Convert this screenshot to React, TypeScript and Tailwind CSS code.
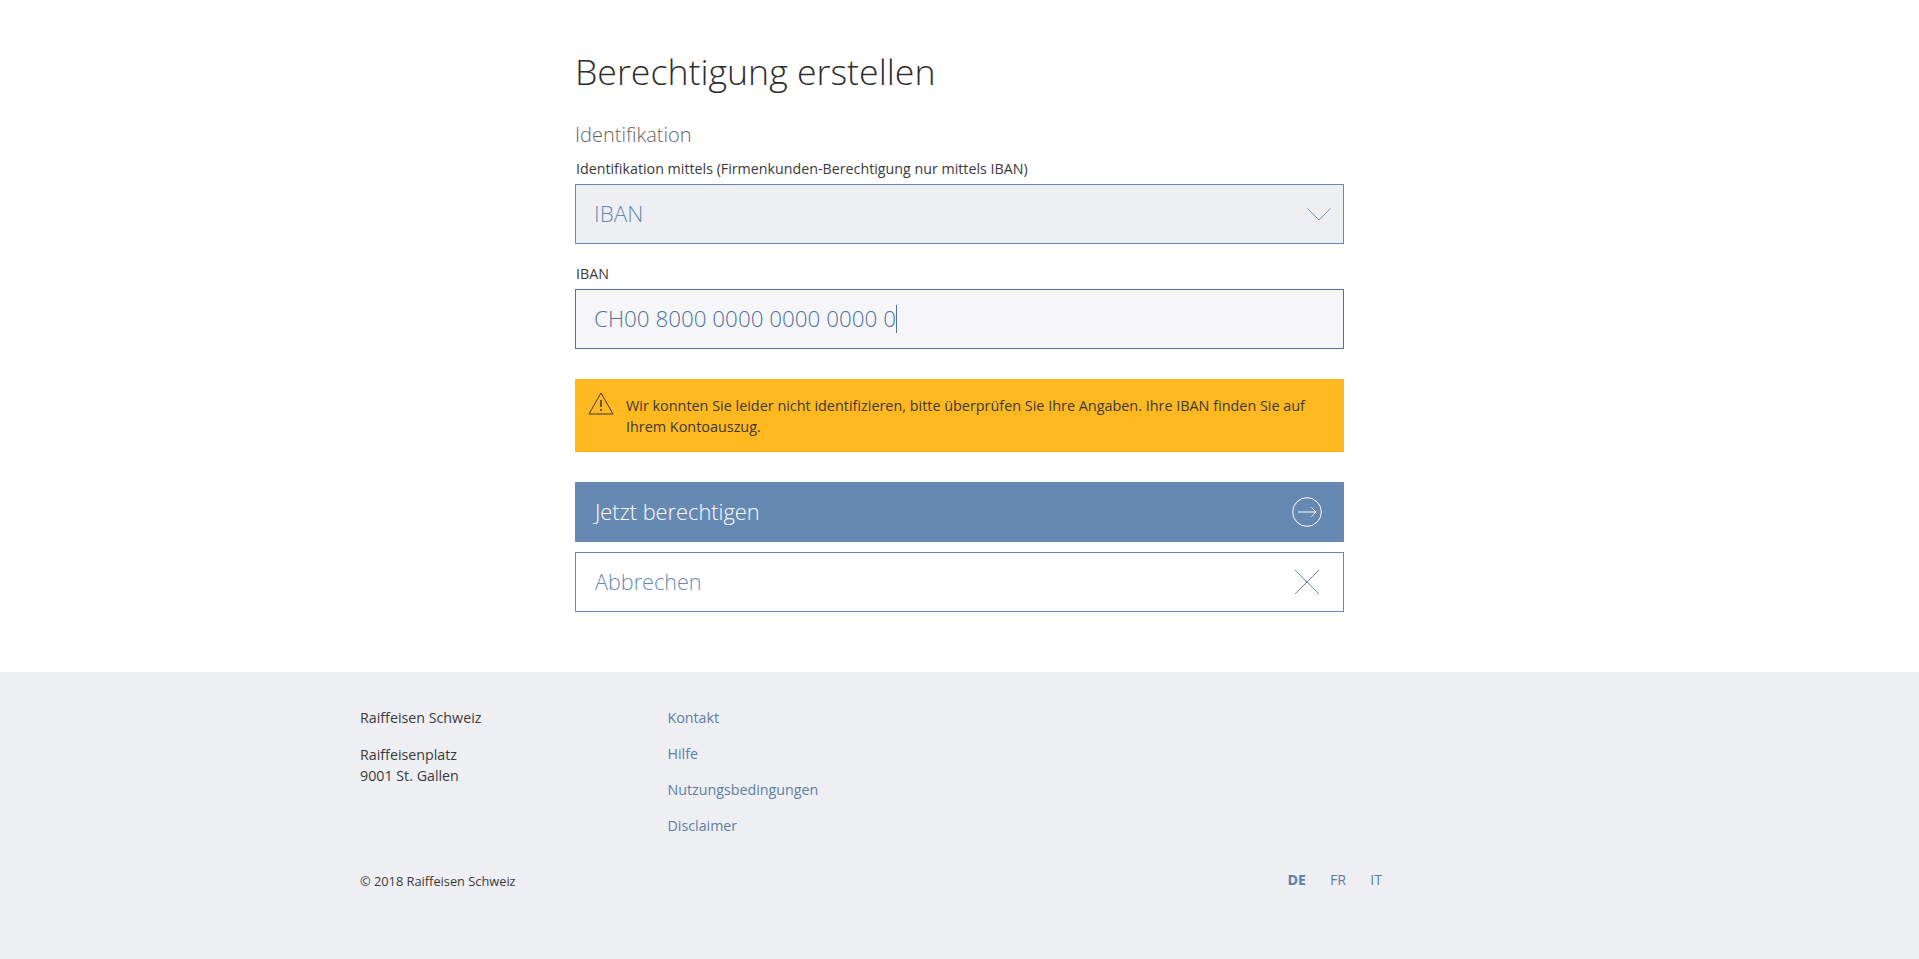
import React from 'react';

const App: React.FC = () => {
  return (
    <div className="min-h-[959px] flex flex-col bg-white font-['Open_Sans',sans-serif] text-[#3a3a3a]">
      <main className="h-[672px] w-[769px] ml-[575px] pt-[46px]">
        <h1 className="text-[35.7px] leading-[50px] font-light text-[#2d2d2d]">Berechtigung erstellen</h1>
        <h2 className="mt-[26px] text-[20px] leading-[26px] font-light text-[#666]">Identifikation</h2>

        <label className="block mt-[11px] ml-px text-[14.25px] leading-[20px]">Identifikation mittels (Firmenkunden-Berechtigung nur mittels IBAN)</label>
        <div className="mt-[5px] h-[60px] flex items-center justify-between border border-[#6689b4] bg-[#eeeff3] pl-[18px] pr-[12px]">
          <span className="text-[22.4px] font-light text-[#6689b4]">IBAN</span>
          <svg width="24" height="13" viewBox="0 0 24 13" fill="none" stroke="#6f91bb" strokeWidth="1">
            <path d="M0.5 0.5 L12 12 L23.5 0.5" />
          </svg>
        </div>

        <label className="block mt-[20px] ml-px text-[14.25px] leading-[20px]">IBAN</label>
        <div className="mt-[5px] h-[60px] flex items-center border border-[#4f729c] bg-[#f6f6f9] pl-[18px]">
          <span className="text-[22.4px] font-light text-[#4f729c]">CH00 8000 0000 0000 0000 0</span>
          <span className="w-px h-[28px] bg-[#4f729c]" />
        </div>

        <div className="mt-[30px] h-[73px] flex bg-[#ffb81f] pl-[13px] pr-[30px] pt-[16px]">
          <svg width="26" height="23" viewBox="0 0 26 23" fill="none" stroke="#3a3a3a" strokeWidth="1" className="shrink-0 -mt-[3px]">
            <path d="M13 1 L25 22 H1 Z" strokeLinejoin="round" />
            <path d="M13 8 V15 M13 17 V19" strokeWidth="1.5" />
          </svg>
          <p className="ml-[12px] text-[14.4px] leading-[21px]">
            Wir konnten Sie leider nicht identifizieren, bitte überprüfen Sie Ihre Angaben. Ihre IBAN finden Sie auf Ihrem Kontoauszug.
          </p>
        </div>

        <button className="mt-[30px] w-full h-[60px] flex items-center justify-between bg-[#6689b4] pl-[20px] pr-[22px] text-[21.8px] font-light text-white">
          Jetzt berechtigen
          <svg width="30" height="30" viewBox="0 0 30 30" fill="none" stroke="#fff" strokeWidth="1">
            <circle cx="15" cy="15" r="14.3" />
            <path d="M6 15 H24 M19.5 10.5 L24 15 L19.5 19.5" />
          </svg>
        </button>
        <button className="mt-[10px] w-full h-[60px] flex items-center justify-between border border-[#6689b4] bg-white pl-[19px] pr-[23px] text-[21.6px] font-light text-[#6689b4]">
          Abbrechen
          <svg width="26" height="26" viewBox="0 0 26 26" fill="none" stroke="#6689b4" strokeWidth="1">
            <path d="M1 1 L25 25 M25 1 L1 25" />
          </svg>
        </button>
      </main>

      <footer className="flex-1 bg-[#eeeff3] pl-[360px] pr-[537px] pt-[35px] text-[14.25px] leading-[21px]">
        <div className="flex">
          <div className="w-[307.5px]">
            <p>Raiffeisen Schweiz</p>
            <p className="mt-[16px]">Raiffeisenplatz</p>
            <p>9001 St. Gallen</p>
          </div>
          <ul className="flex flex-col gap-[15px] text-[#5c7da6]">
            <li>Kontakt</li>
            <li>Hilfe</li>
            <li>Nutzungsbedingungen</li>
            <li>Disclaimer</li>
          </ul>
        </div>
        <div className="mt-[33px] flex items-center justify-between">
          <span className="text-[12.8px] translate-y-[2px]">© 2018 Raiffeisen Schweiz</span>
          <div className="flex gap-[24px] text-[#5c7da6]">
            <span className="font-bold">DE</span>
            <span>FR</span>
            <span>IT</span>
          </div>
        </div>
      </footer>
    </div>
  );
};

export default App;
